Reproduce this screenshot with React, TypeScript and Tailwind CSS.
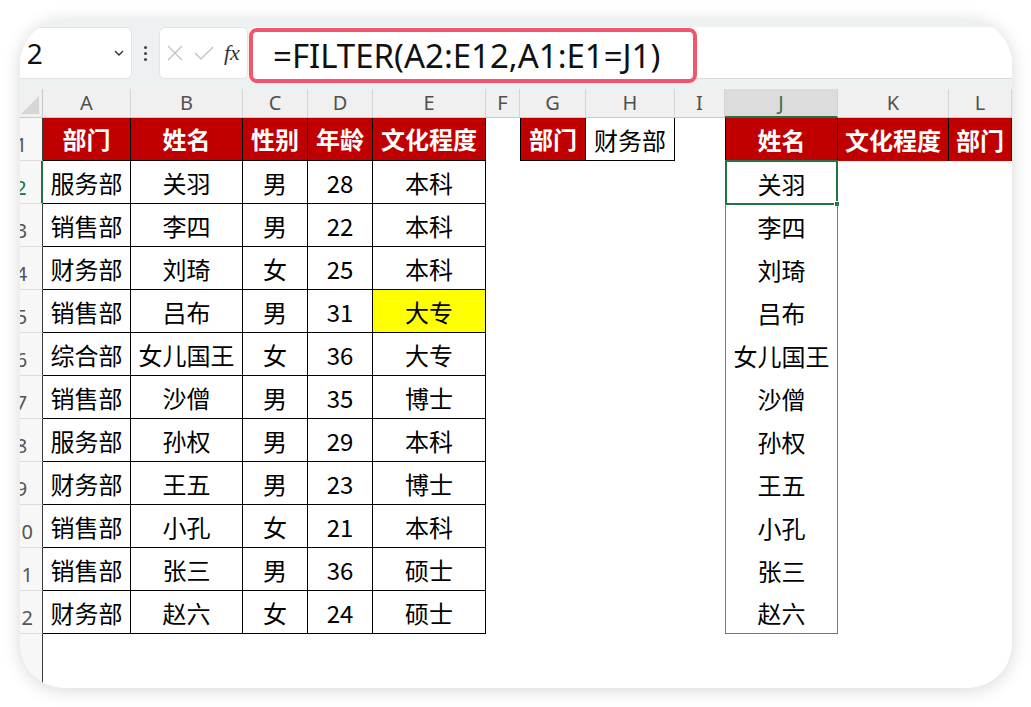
import React from 'react';

const CJK = 'font-["Noto_Sans_CJK_SC","Noto_Sans",sans-serif]';

const letters = ['A', 'B', 'C', 'D', 'E', 'F', 'G', 'H', 'I', 'J', 'K', 'L'];

// data rows 2..12 (A..E)
const rows: string[][] = [
  ['服务部', '关羽', '男', '28', '本科'],
  ['销售部', '李四', '男', '22', '本科'],
  ['财务部', '刘琦', '女', '25', '本科'],
  ['销售部', '吕布', '男', '31', '大专'],
  ['综合部', '女儿国王', '女', '36', '大专'],
  ['销售部', '沙僧', '男', '35', '博士'],
  ['服务部', '孙权', '男', '29', '本科'],
  ['财务部', '王五', '男', '23', '博士'],
  ['销售部', '小孔', '女', '21', '本科'],
  ['销售部', '张三', '男', '36', '硕士'],
  ['财务部', '赵六', '女', '24', '硕士'],
];

const headers = ['部门', '姓名', '性别', '年龄', '文化程度'];

const redCell = `flex items-center justify-center bg-[#c00000] text-white font-bold text-[24px] leading-none ${CJK}`;
const dataCell = `flex items-center justify-center pt-[2px] text-black text-[24px] leading-none ${CJK}`;

function RowHeader({ n, active }: { n: number; active?: boolean }) {
  return (
    <div
      className={`flex items-end justify-center pl-[4px] pb-[5px] bg-[#f7f7f7] border-b border-[#dcdcdc] text-[20px] leading-none font-["Noto_Sans",sans-serif] ${
        active ? 'border-r-2 border-r-[#217346] text-[#217346]' : 'border-r border-r-[#3c3c3c] text-[#555]'
      }`}
    >
      {n}
    </div>
  );
}

function Sheet() {
  const cells: React.ReactNode[] = [];

  // column header row
  cells.push(
    <div key="corner" className="relative bg-[#f0f0f0] border-r border-b border-[#c8c8c8]">
      <svg className="absolute right-[3px] bottom-[3px]" width="18" height="18" viewBox="0 0 18 18">
        <polygon points="18,0 18,18 0,18" fill="#d6d6d6" />
      </svg>
    </div>
  );
  letters.forEach((l) => {
    const sel = l === 'J';
    cells.push(
      <div
        key={'h' + l}
        className={`flex items-center justify-center text-[20px] leading-none font-["Noto_Sans",sans-serif] border-r border-r-[#d4d4d4] ${
          sel ? 'bg-[#dcdcdc] text-[#3f6b52] border-b-2 border-b-[#217346]' : 'bg-[#f0f0f0] text-[#505050] border-b border-b-[#c8c8c8]'
        }`}
      >
        {l}
      </div>
    );
  });

  // row 1
  cells.push(<RowHeader key="r1" n={1} />);
  headers.forEach((h) => {
    cells.push(
      <div key={'t' + h} className={`${redCell} border-r border-b border-black`}>
        {h}
      </div>
    );
  });
  cells.push(<div key="f1" />);
  cells.push(
    <div key="g1" className={`${redCell} border-l border-r border-b border-black`}>
      部门
    </div>
  );
  cells.push(
    <div key="h1" className={`${dataCell} border-r border-b border-black`}>
      财务部
    </div>
  );
  cells.push(<div key="i1" />);
  cells.push(
    <div key="j1" className={`${redCell} border-l border-r border-black`}>
      姓名
    </div>
  );
  cells.push(
    <div key="k1" className={`${redCell} border-r border-black`}>
      文化程度
    </div>
  );
  cells.push(
    <div key="l1" className={`${redCell} border-r border-black`}>
      部门
    </div>
  );

  // rows 2..12
  rows.forEach((row, i) => {
    const n = i + 2;
    cells.push(<RowHeader key={'r' + n} n={n} active={n === 2} />);
    row.forEach((v, c) => {
      const yellow = n === 5 && c === 4;
      cells.push(
        <div
          key={`d${n}-${c}`}
          className={`${dataCell} border-r border-b border-black ${yellow ? 'bg-[#ffff00]' : 'bg-white'}`}
        >
          {v}
        </div>
      );
    });
    cells.push(<div key={`f${n}`} />, <div key={`g${n}`} />, <div key={`h${n}`} />, <div key={`i${n}`} />);
    cells.push(
      <div
        key={`j${n}`}
        className={`${dataCell} relative border-l border-r border-[#5577cc] ${n === 12 ? 'border-b' : ''}`}
      >
        {row[1]}
        {n === 2 && (
          <div className="absolute inset-[-1px] border-2 border-[#217346]">
            <div className="absolute right-[-4px] bottom-[-4px] w-[6px] h-[6px] bg-[#217346] border border-white" />
          </div>
        )}
      </div>
    );
    cells.push(<div key={`k${n}`} />, <div key={`l${n}`} />);
  });

  // remaining empty area
  cells.push(<div key="rest" className="bg-[#f7f7f7] border-r border-r-[#3c3c3c]" />);

  return (
    <div className="ml-[-23px] grid grid-cols-[46px_88px_112px_65px_65px_113px_34px_66px_89px_50px_113px_111px_63px] grid-rows-[29px_repeat(12,43px)_54px]">
      {cells}
    </div>
  );
}

function Toolbar() {
  return (
    <div className="flex items-start h-[69px] pt-[7px] bg-[#eef1f1]">
      {/* name box */}
      <div className="ml-[-30px] w-[142px] h-[52px] flex items-center justify-between bg-white rounded-[6px] border border-[#e2e5e5] pl-[21px] pr-[6px]">
        <span className="text-[28px] leading-none tracking-[7px] text-[#111] font-['Noto_Sans',sans-serif]">J2</span>
        <svg width="12" height="8" viewBox="0 0 12 8">
          <polyline points="2,2 6,6 10,2" fill="none" stroke="#333" strokeWidth="1.4" />
        </svg>
      </div>
      {/* dots */}
      <div className="w-[27px] h-[52px] flex flex-col items-center justify-center gap-[3px]">
        <span className="w-[3px] h-[3px] bg-[#444] rounded-full" />
        <span className="w-[3px] h-[3px] bg-[#444] rounded-full" />
        <span className="w-[3px] h-[3px] bg-[#444] rounded-full" />
      </div>
      {/* fx box */}
      <div className="w-[89px] h-[52px] flex items-center bg-white rounded-[6px] border border-[#e2e5e5] pl-[6px] gap-[10px]">
        <svg width="18" height="18" viewBox="0 0 18 18">
          <path d="M2 2 L16 16 M16 2 L2 16" stroke="#c3c3c3" strokeWidth="1.4" fill="none" />
        </svg>
        <svg width="20" height="16" viewBox="0 0 20 16">
          <path d="M1 8 L7 14 L19 2" stroke="#c3c3c3" strokeWidth="1.4" fill="none" />
        </svg>
        <span className="text-[22px] italic leading-none text-[#333] font-['Liberation_Serif',serif]">fx</span>
      </div>
      {/* formula bar */}
      <div className="flex-1 h-[52px] ml-[1px] bg-white rounded-l-[6px] border-b border-[#d8dcdc]">
        <div className="w-[448px] h-[55px] mt-[1px] flex items-center border-4 border-[#f0566c] rounded-[8px] pl-[20px] bg-white">
          <span className="text-[33px] leading-none text-[#111] font-['Noto_Sans',sans-serif]">=FILTER(A2:E12,A1:E1=J1)</span>
        </div>
      </div>
    </div>
  );
}

export default function App() {
  return (
    <div className="w-[1031px] h-[707px] bg-white pt-[20px] pl-[20px]">
      <div className="w-[992px] h-[668px] rounded-[44px] overflow-hidden bg-white shadow-[0_2px_18px_rgba(0,0,0,0.16)]">
        <Toolbar />
        <Sheet />
      </div>
    </div>
  );
}
